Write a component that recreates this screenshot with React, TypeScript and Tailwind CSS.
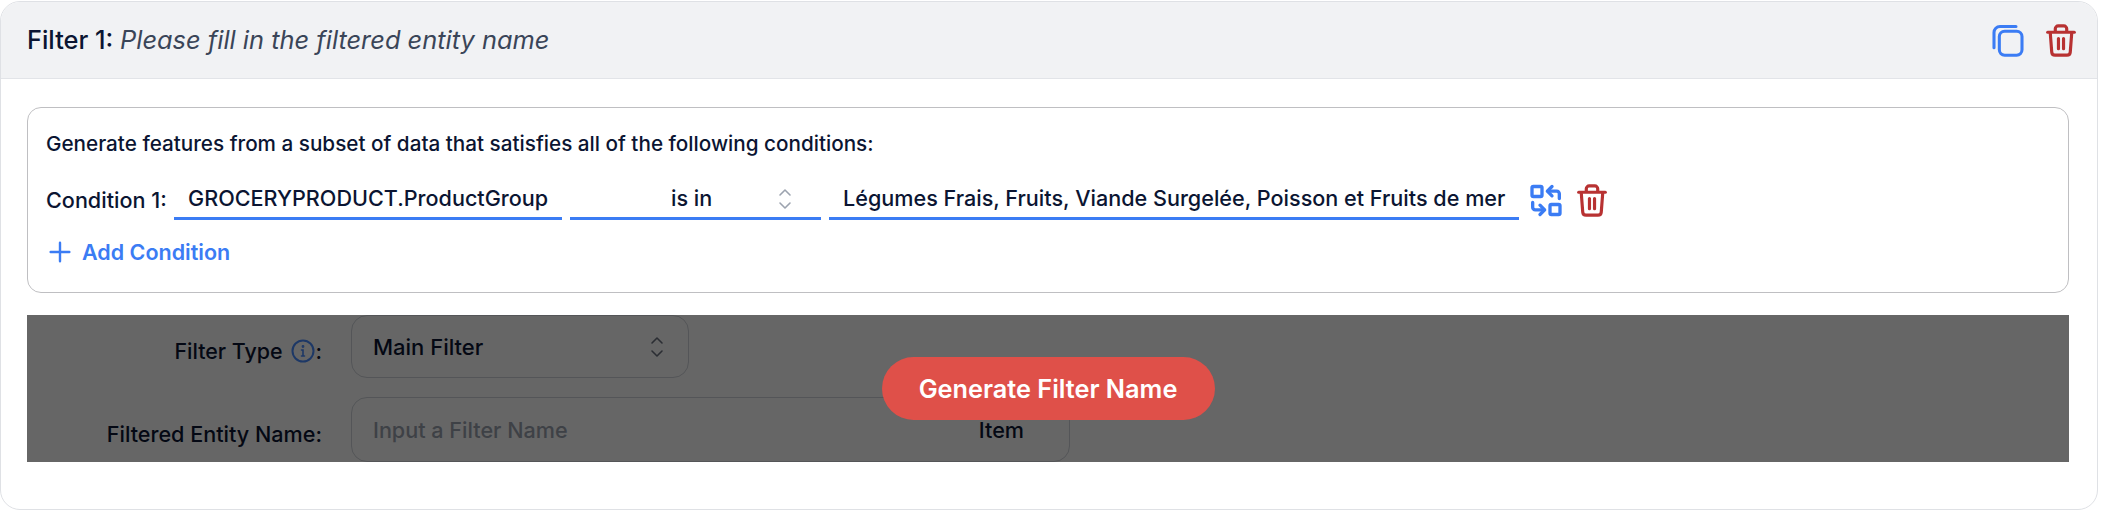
import React from "react";

function TrashIcon({ className }: { className: string }) {
  return (
    <svg viewBox="0.5 0 23 26" fill="none" stroke="currentColor" strokeWidth="2.5" className={className}>
      <path d="M1.5 6.5h21" strokeLinecap="round" />
      <path d="M7.5 6.5V3.8A2.3 2.3 0 0 1 9.8 1.5h4.4a2.3 2.3 0 0 1 2.3 2.3v2.7" />
      <path d="M3.5 6.5l1.2 15.6a2.6 2.6 0 0 0 2.6 2.4h9.4a2.6 2.6 0 0 0 2.6-2.4l1.2-15.6" />
      <path d="M10 11.5v8M14 11.5v8" strokeLinecap="round" />
    </svg>
  );
}

function CopyIcon({ className }: { className: string }) {
  return (
    <svg viewBox="0 0 24 24" fill="none" stroke="currentColor" strokeWidth="2.3" className={className}>
      <rect x="5.5" y="5" width="17" height="18" rx="4" />
      <path d="M18 1.5H6A4.5 4.5 0 0 0 1.5 6v11.5" strokeLinecap="round" />
    </svg>
  );
}

function SwapIcon({ className }: { className: string }) {
  return (
    <svg viewBox="0 0 24 24" fill="none" stroke="currentColor" strokeWidth="2.5" strokeLinecap="round" strokeLinejoin="round" className={className}>
      <rect x="1.5" y="1.5" width="7.5" height="7.5" rx="1" />
      <rect x="15" y="15" width="7.5" height="7.5" rx="1" />
      <path d="M22 10.5V7a2 2 0 0 0-2-2h-6.5" />
      <path d="M16.5 1.5L13 5l3.5 3.5" />
      <path d="M2 13.5V17a2 2 0 0 0 2 2h6.5" />
      <path d="M7.5 15.5L11 19l-3.5 3.5" />
    </svg>
  );
}

function Chevrons({ className }: { className: string }) {
  return (
    <svg viewBox="0 0 16 24" fill="none" stroke="currentColor" strokeWidth="1.6" strokeLinecap="round" strokeLinejoin="round" className={className}>
      <path d="M3 8l5-5 5 5" />
      <path d="M3 16l5 5 5-5" />
    </svg>
  );
}

function InfoIcon({ className }: { className: string }) {
  return (
    <svg viewBox="0 0 24 24" fill="none" stroke="currentColor" strokeWidth="2" strokeLinecap="round" className={className}>
      <circle cx="12" cy="12" r="10.5" />
      <path d="M10.5 11H12v6M10.5 17h3" strokeWidth="1.6" />
      <circle cx="12" cy="7.5" r="0.6" strokeWidth="1.6" />
    </svg>
  );
}

export default function App() {
  return (
    <div className="w-[2110px] h-[526px] bg-white font-['Inter',sans-serif] font-[450] text-[21.6px] text-[#0b1532] pt-px overflow-hidden">
      <div className="w-[2098px] h-[509px] border border-[#dfe1e5] rounded-[20px] overflow-hidden">
        <div className="h-[77px] bg-[#f1f2f4] border-b border-[#e2e4e8] flex items-center justify-between pl-[26px] pr-[21px]">
          <div className="text-[25.4px]">
            <span>Filter 1: </span>
            <span className="italic text-[#3a4558]">Please fill in the filtered entity name</span>
          </div>
          <div className="flex items-center gap-[22px]">
            <CopyIcon className="w-[32px] h-[33px] text-[#3b7cf4]" />
            <TrashIcon className="w-[30px] h-[33px] text-[#b83232]" />
          </div>
        </div>

        <div className="pl-[26px] pr-[28px] pt-[28px]">
          <div className="h-[186px] border border-[#bfbfc2] rounded-[14px] pl-[18px] pr-4 pt-[22px]">
            <div className="h-[28px] leading-[28px] text-[20.7px]">Generate features from a subset of data that satisfies all of the following conditions:</div>
            <div className="flex items-center mt-[22px]">
              <div className="w-[128px] shrink-0 whitespace-nowrap">Condition 1:</div>
              <div className="w-[388px] h-[40px] border-b-[3px] border-[#3b7cf4] pl-[14px] flex items-center whitespace-nowrap">GROCERYPRODUCT.ProductGroup</div>
              <div className="w-[251px] h-[40px] ml-[8px] border-b-[3px] border-[#3b7cf4] flex items-center">
                <span className="pl-[101px]">is in</span>
                <Chevrons className="w-[16px] h-[24px] text-[#9ca3af] ml-[65px]" />
              </div>
              <div className="w-[690px] h-[40px] ml-[8px] border-b-[3px] border-[#3b7cf4] pl-[14px] flex items-center whitespace-nowrap">Légumes Frais, Fruits, Viande Surgelée, Poisson et Fruits de mer</div>
              <SwapIcon className="w-[32px] h-[33px] ml-[11px] text-[#3b7cf4]" />
              <TrashIcon className="w-[30px] h-[33px] ml-[15px] text-[#b83232]" />
            </div>
            <div className="flex items-center h-[28px] mt-[18px] text-[#3b7cf4] font-semibold text-[21.5px]">
              <svg viewBox="0 0 20 20" fill="none" stroke="currentColor" strokeWidth="2.2" strokeLinecap="round" className="w-[22px] h-[22px] ml-[3px]">
                <path d="M10 1.5v17M1.5 10h17" />
              </svg>
              <span className="ml-[11px]">Add Condition</span>
            </div>
          </div>

          <div className="relative h-[147px] mt-[22px] overflow-hidden">
            <div className="flex flex-col gap-[10px]">
              <div className="flex">
                <div className="w-[295px] h-[72px] flex items-center justify-end font-medium text-[21.4px]">
                  <span>Filter Type</span>
                  <InfoIcon className="w-[24px] h-[24px] ml-[8px] mr-[1px] text-[#4a8cff]" />
                  <span>:</span>
                </div>
                <div className="w-[338px] h-[63px] ml-[29px] border border-[#d1d5db] rounded-[16px] flex items-center justify-between pl-[21px] pr-[23px] text-[22px]">
                  <span className="pt-[2px]">Main Filter</span>
                  <Chevrons className="w-[16px] h-[24px] text-[#6b7280]" />
                </div>
              </div>
              <div className="flex">
                <div className="w-[295px] h-[72px] flex items-center justify-end font-medium pt-[3px]">Filtered Entity Name:</div>
                <div className="w-[719px] h-[65px] ml-[29px] border border-[#d1d5db] rounded-[16px] flex items-center justify-between pl-[21px] pr-[45px]">
                  <span className="text-[#9ca3af] pt-[2px]">Input a Filter Name</span>
                  <span className="pt-[2px]">Item</span>
                </div>
              </div>
            </div>
            <div className="absolute inset-0 bg-black/60 flex items-center justify-center">
              <button className="w-[333px] h-[63px] rounded-full bg-[#df5049] text-white text-[25.3px] font-semibold">Generate Filter Name</button>
            </div>
          </div>
        </div>
      </div>
    </div>
  );
}
